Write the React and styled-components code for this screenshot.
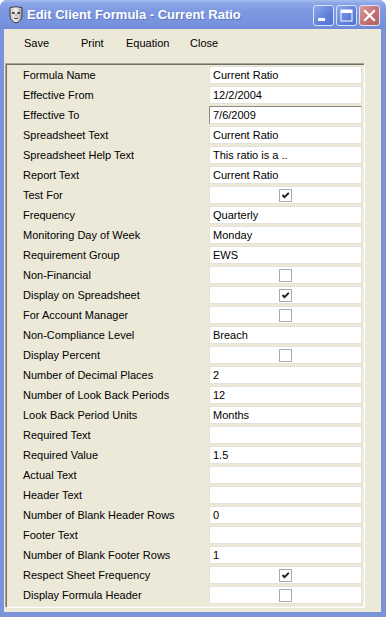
import React from 'react'
import styled, { createGlobalStyle } from 'styled-components'

const GlobalStyle = createGlobalStyle`
  html, body { margin: 0; padding: 0; background: #fff; }
  body { font-family: "Liberation Sans", Arial, sans-serif; }
`

const rows = [
  { label: 'Formula Name', value: 'Current Ratio' },
  { label: 'Effective From', value: '12/2/2004' },
  { label: 'Effective To', value: '7/6/2009', active: true },
  { label: 'Spreadsheet Text', value: 'Current Ratio' },
  { label: 'Spreadsheet Help Text', value: 'This ratio is a ..' },
  { label: 'Report Text', value: 'Current Ratio' },
  { label: 'Test For', check: true },
  { label: 'Frequency', value: 'Quarterly' },
  { label: 'Monitoring Day of Week', value: 'Monday' },
  { label: 'Requirement Group', value: 'EWS' },
  { label: 'Non-Financial', check: false },
  { label: 'Display on Spreadsheet', check: true },
  { label: 'For Account Manager', check: false },
  { label: 'Non-Compliance Level', value: 'Breach' },
  { label: 'Display Percent', check: false },
  { label: 'Number of Decimal Places', value: '2' },
  { label: 'Number of Look Back Periods', value: '12' },
  { label: 'Look Back Period Units', value: 'Months' },
  { label: 'Required Text', value: '' },
  { label: 'Required Value', value: '1.5' },
  { label: 'Actual Text', value: '' },
  { label: 'Header Text', value: '' },
  { label: 'Number of Blank Header Rows', value: '0' },
  { label: 'Footer Text', value: '' },
  { label: 'Number of Blank Footer Rows', value: '1' },
  { label: 'Respect Sheet Frequency', check: true },
  { label: 'Display Formula Header', check: false },
]

function App() {
  return (
    <>
      <GlobalStyle />
      <Window>
        <TitleBar>
          <AppIcon />
          <Title>Edit Client Formula - Current Ratio</Title>
          <Controls>
            <CtlButton>
              <svg width="21" height="21" viewBox="0 0 21 21">
                <rect x="5" y="13" width="7" height="3" fill="#fff" />
              </svg>
            </CtlButton>
            <CtlButton>
              <svg width="21" height="21" viewBox="0 0 21 21">
                <rect x="5" y="5" width="11" height="11" fill="none" stroke="#fff" strokeWidth="1" />
                <rect x="5" y="5" width="11" height="3" fill="#fff" />
              </svg>
            </CtlButton>
            <CtlButton $close>
              <svg width="21" height="21" viewBox="0 0 21 21">
                <path d="M6 6 L15 15 M15 6 L6 15" stroke="#fff" strokeWidth="2.2" strokeLinecap="square" />
              </svg>
            </CtlButton>
          </Controls>
        </TitleBar>
        <Body>
          <Toolbar>
            <ToolButton>Save</ToolButton>
            <ToolButton>Print</ToolButton>
            <ToolButton>Equation</ToolButton>
            <ToolButton>Close</ToolButton>
          </Toolbar>
          <Grid>
            {rows.map((r) => (
              <Row key={r.label}>
                <Label>{r.label}</Label>
                <Cell $active={r.active} $center={r.check !== undefined}>
                  {r.check !== undefined ? <CheckBox checked={r.check} /> : r.value}
                </Cell>
              </Row>
            ))}
          </Grid>
        </Body>
      </Window>
    </>
  )
}

function AppIcon() {
  return (
    <IconWrap>
      <svg width="16" height="18" viewBox="0 0 16 18">
        <defs>
          <linearGradient id="mask" x1="0" y1="0" x2="1" y2="0">
            <stop offset="0" stopColor="#c8c8c8" />
            <stop offset="0.5" stopColor="#f2f2f2" />
            <stop offset="1" stopColor="#9a9a9a" />
          </linearGradient>
        </defs>
        <path d="M2 1.5 Q8 0 14 1.5 L14 9 Q14 15 8 17 Q2 15 2 9 Z" fill="url(#mask)" stroke="#3c3c3c" strokeWidth="1" />
        <path d="M4 6 L7 6.5 L6.5 8 L4 7.5 Z" fill="#222" />
        <path d="M12 6 L9 6.5 L9.5 8 L12 7.5 Z" fill="#222" />
        <path d="M6 12 Q8 13.5 10 12" fill="none" stroke="#333" strokeWidth="1" />
        <path d="M8 8 L8 10.5" stroke="#777" strokeWidth="1" />
      </svg>
    </IconWrap>
  )
}

function CheckBox({ checked }) {
  return (
    <Box>
      {checked && (
        <svg width="11" height="11" viewBox="0 0 11 11">
          <path d="M2.5 5 L4.5 7.2 L8.8 2.8" fill="none" stroke="#1c1c1c" strokeWidth="1.9" />
        </svg>
      )}
    </Box>
  )
}

const Window = styled.div`
  width: 386px;
  height: 617px;
  box-sizing: border-box;
  display: flex;
  flex-direction: column;
  background: #7a94dc;
  border-radius: 7px 7px 0 0;
  padding: 0 5px 5px 4px;
  overflow: hidden;
`

const TitleBar = styled.div`
  height: 29px;
  margin: 0 -5px 0 -4px;
  padding: 0 6px 0 8px;
  display: flex;
  align-items: center;
  background: linear-gradient(#a6bcf0 0%, #8aa5e6 12%, #7d98e0 40%, #7893de 80%, #6f8ad6 100%);
  border-radius: 7px 7px 0 0;
`

const IconWrap = styled.div`
  width: 16px;
  height: 18px;
  margin-right: 2px;
  display: flex;
`

const Title = styled.div`
  flex: 1;
  color: #fff;
  font-family: "Liberation Sans", Arial, sans-serif;
  font-weight: bold;
  font-size: 13px;
  padding-left: 1px;
  text-shadow: 1px 1px 0 rgba(40, 60, 140, 0.35);
  white-space: nowrap;
`

const Controls = styled.div`
  display: flex;
  gap: 2px;
  margin-top: 2px;
`

const CtlButton = styled.div`
  width: 21px;
  height: 21px;
  box-sizing: border-box;
  border: 1px solid #d8e2fa;
  border-radius: 3px;
  background: ${(p) =>
    p.$close
      ? 'linear-gradient(135deg, #d99a9a, #c46f6f 60%, #b45f5f)'
      : 'linear-gradient(135deg, #8fa9ea, #5f80da 60%, #5274d2)'};
  display: flex;
  align-items: center;
  justify-content: center;
  svg { display: block; margin: -1px; }
`

const Body = styled.div`
  flex: 1;
  background: #ece9d8;
  display: flex;
  flex-direction: column;
`

const Toolbar = styled.div`
  height: 28px;
  display: grid;
  grid-template-columns: 57px 45px 64px auto;
  align-items: center;
  padding-left: 20px;
  font-size: 11px;
  color: #000;
`

const ToolButton = styled.div`
  cursor: default;
`

const Grid = styled.div`
  margin: 6px 0 0 1px;
  width: 360px;
  box-sizing: border-box;
  border: 1px solid;
  border-color: #a7a496 #fff #fff #a7a496;
  box-shadow: inset 1px 1px 0 #716f64, inset -1px -1px 0 #f1efe2;
  padding: 1px 2px 2px 1px;
`

const Row = styled.div`
  display: grid;
  grid-template-columns: 202px 153px;
  height: 20px;
  align-items: center;
`

const Label = styled.div`
  padding-left: 16px;
  font-size: 11px;
  color: #000;
  white-space: nowrap;
`

const Cell = styled.div`
  height: 18px;
  box-sizing: border-box;
  background: #fff;
  border: 1px solid;
  border-color: ${(p) => (p.$active ? '#8d8b80 #e4e2d6 #e4e2d6 #8d8b80' : '#e4e2d6')};
  padding-left: 3px;
  font-size: 11px;
  color: #000;
  display: flex;
  align-items: center;
  justify-content: ${(p) => (p.$center ? 'center' : 'flex-start')};
  white-space: nowrap;
`

const Box = styled.div`
  width: 13px;
  height: 13px;
  box-sizing: border-box;
  border: 1px solid #a9a9a9;
  background: #fff;
  margin-left: -3px;
  display: flex;
  align-items: center;
  justify-content: center;
`

export default App
